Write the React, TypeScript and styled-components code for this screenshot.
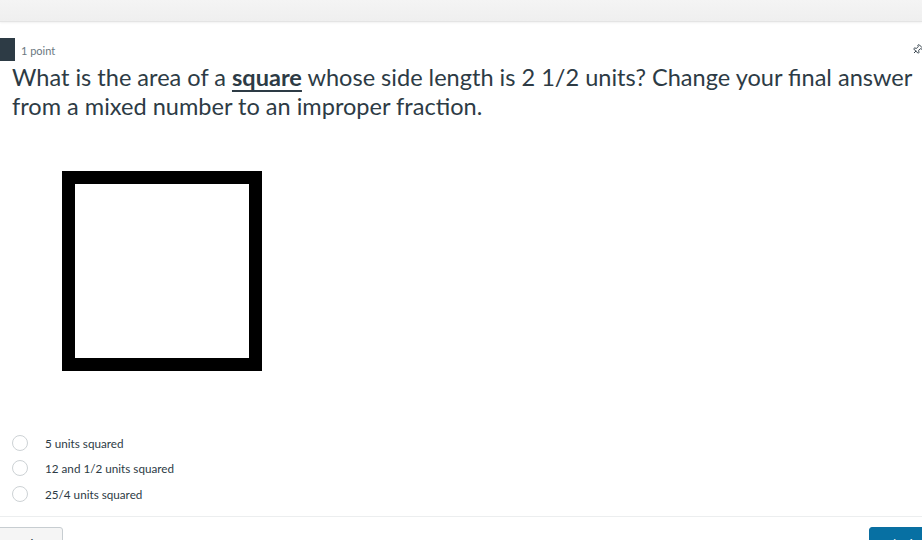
import React from 'react';
import styled, { createGlobalStyle } from 'styled-components';
import { Pin } from 'lucide-react';

const GlobalStyle = createGlobalStyle`
    html, body {
        margin: 0;
        padding: 0;
        background: #ffffff;
        font-family: Lato, "Open Sans", Arial, sans-serif;
        color: #2d3b45;
        overflow: hidden;
    }
`;

const Page = styled.div`
    width: 922px;
    height: 540px;
    overflow: hidden;
    display: flex;
    flex-direction: column;
`;

const TopBar = styled.div`
    height: 21px;
    flex-shrink: 0;
    background: linear-gradient(#f4f4f4, #efefef);
    border-bottom: 1px solid #e4e4e4;
    box-shadow: 0 1px 2px rgba(0, 0, 0, 0.06);
`;

const Card = styled.section`
    display: flex;
    flex-direction: column;
    padding-top: 16px;
`;

const Header = styled.div`
    display: flex;
    align-items: center;
    justify-content: space-between;
    height: 23px;
`;

const HeaderLeft = styled.div`
    display: flex;
    align-items: center;
    gap: 6px;
    height: 100%;
`;

const Tab = styled.div`
    width: 15px;
    height: 23px;
    background: #2d3b45;
`;

const Points = styled.span`
    font-size: 11px;
    color: #6b7780;
    padding-top: 1px;
`;

const PinButton = styled.span`
    display: flex;
    align-items: center;
    margin-right: -1px;
    color: #2d3b45;
    transform: rotate(45deg);
`;

const Question = styled.p`
    margin: 2px 0 0 12px;
    font-size: 23.55px;
    line-height: 29px;
    color: #2d3b45;

    strong {
        font-weight: 700;
        text-decoration: underline;
        text-decoration-thickness: 2px;
        text-underline-offset: 4px;
    }
`;

const Figure = styled.div`
    margin: 50px 0 0 62px;
    width: 200px;
    height: 200px;
`;

const Options = styled.ul`
    list-style: none;
    margin: 59px 0 0 0;
    padding: 0;
    display: flex;
    flex-direction: column;
`;

const Option = styled.li`
    display: flex;
    align-items: center;
    height: 25.5px;
    font-size: 11.7px;
    color: #2d3b45;
`;

const Radio = styled.span`
    box-sizing: border-box;
    width: 16px;
    height: 16px;
    border-radius: 50%;
    border: 1px solid #cdd2d5;
    background: #fff;
    margin: 0 17px 0 12px;
`;

const Divider = styled.hr`
    margin: 9px 0 0 0;
    border: none;
    border-top: 1px solid #eceeef;
`;

const Footer = styled.div`
    display: flex;
    justify-content: space-between;
    margin-top: 10px;
`;

const Button = styled.button<{ $primary?: boolean }>`
    font-family: Lato, Arial, sans-serif;
    font-size: 12px;
    height: 34px;
    padding: 0 10px;
    border-radius: 3px;
    border: 1px solid ${p => (p.$primary ? '#0b6ea0' : '#c7cdd1')};
    background: ${p => (p.$primary ? '#0770a3' : '#f5f5f5')};
    color: ${p => (p.$primary ? '#ffffff' : '#2d3b45')};
    margin-left: ${p => (p.$primary ? '0' : '-4px')};
    margin-right: ${p => (p.$primary ? '-6px' : '0')};
    cursor: pointer;
`;

const options = ['5 units squared', '12 and 1/2 units squared', '25/4 units squared'];

const App: React.FC = () => {
    return (
        <Page>
            <GlobalStyle />
            <TopBar />
            <Card>
                <Header>
                    <HeaderLeft>
                        <Tab />
                        <Points>1 point</Points>
                    </HeaderLeft>
                    <PinButton>
                        <Pin size={11} strokeWidth={2} />
                    </PinButton>
                </Header>
                <Question>
                    What is the area of a <strong>square</strong> whose side length is 2 1/2 units? Change your final answer from a mixed number to an improper fraction.
                </Question>
                <Figure>
                    <svg width="200" height="200" viewBox="0 0 200 200">
                        <rect x="6.5" y="6.5" width="187" height="187" fill="#fff" stroke="#000" strokeWidth="13" />
                    </svg>
                </Figure>
                <Options>
                    {options.map(o => (
                        <Option key={o}>
                            <Radio />
                            {o}
                        </Option>
                    ))}
                </Options>
                <Divider />
                <Footer>
                    <Button>Previous</Button>
                    <Button $primary>Submit</Button>
                </Footer>
            </Card>
        </Page>
    );
};

export default App;
